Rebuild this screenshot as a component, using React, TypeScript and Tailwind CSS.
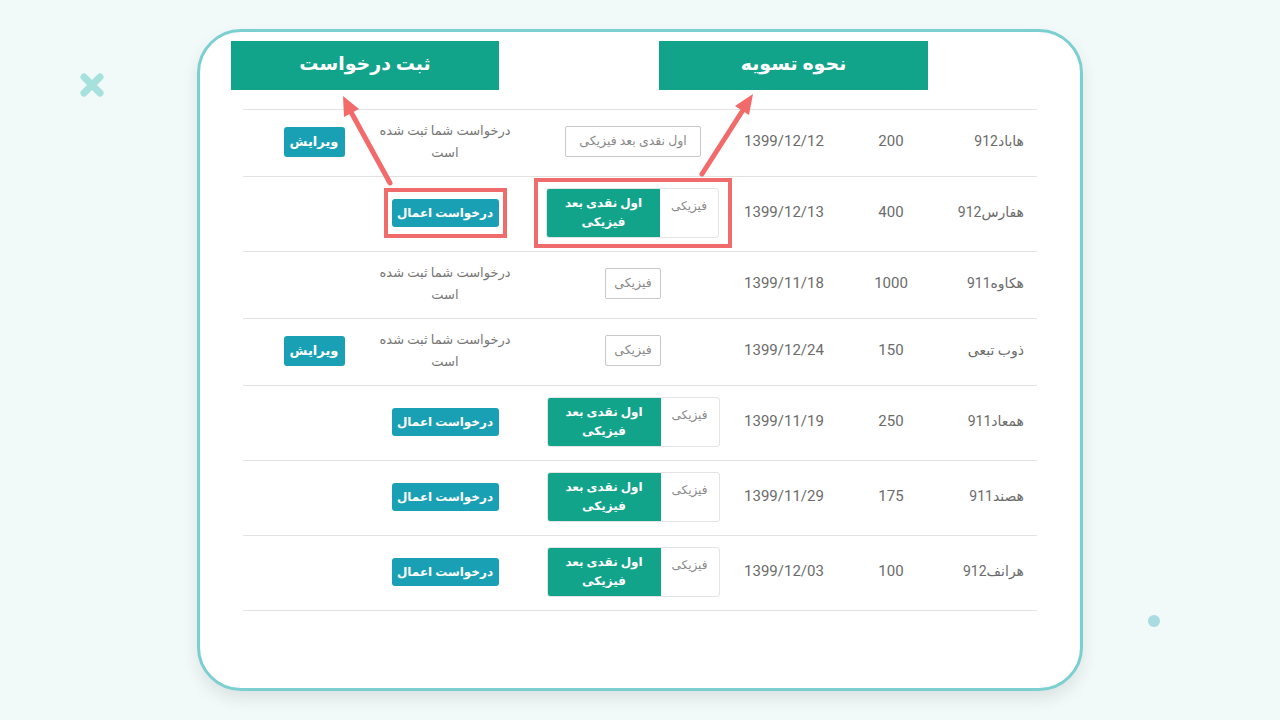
import React from "react";

type Row = {
  name: string;
  amount: string;
  date: string;
  settle: "box" | "fiz" | "toggle";
  done: boolean;
  edit: boolean;
  highlight?: boolean;
};

const rows: Row[] = [
  { name: "هاباد912", amount: "200", date: "1399/12/12", settle: "box", done: true, edit: true },
  { name: "هفارس912", amount: "400", date: "1399/12/13", settle: "toggle", done: false, edit: false, highlight: true },
  { name: "هکاوه911", amount: "1000", date: "1399/11/18", settle: "fiz", done: true, edit: false },
  { name: "ذوب تبعی", amount: "150", date: "1399/12/24", settle: "fiz", done: true, edit: true },
  { name: "همعاد911", amount: "250", date: "1399/11/19", settle: "toggle", done: false, edit: false },
  { name: "هصند911", amount: "175", date: "1399/11/29", settle: "toggle", done: false, edit: false },
  { name: "هرانف912", amount: "100", date: "1399/12/03", settle: "toggle", done: false, edit: false },
];

function Toggle() {
  return (
    <div className="flex h-[50px] w-[173px] overflow-hidden rounded-[3px] border border-[#e4e4e4]">
      <div className="flex w-[58px] justify-center pt-[8px] text-[12px] text-[#8a8a8a]">فیزیکی</div>
      <div className="flex flex-1 items-center justify-center bg-[#12a38b] px-2 text-center text-[12px] font-bold leading-[19px] text-white">
        اول نقدی بعد
        <br />
        فیزیکی
      </div>
    </div>
  );
}

function Settlement({ kind, highlight }: { kind: Row["settle"]; highlight?: boolean }) {
  if (kind === "box")
    return (
      <div className="flex h-[31px] w-[136px] items-center justify-center rounded-[2px] border border-[#c8c8c8] text-[12.5px] text-[#8a8a8a]">
        اول نقدی بعد فیزیکی
      </div>
    );
  if (kind === "fiz")
    return (
      <div className="flex h-[31px] w-[56px] items-center justify-center rounded-[2px] border border-[#c8c8c8] text-[12.5px] text-[#8a8a8a]">
        فیزیکی
      </div>
    );
  if (highlight)
    return (
      <div className="border-[4px] border-[#f06b6b] py-[6px] pl-[8px] pr-[9px]">
        <Toggle />
      </div>
    );
  return <Toggle />;
}

function ApplyButton() {
  return (
    <button className="h-[28px] w-[107px] rounded-[3px] bg-[#1aa0b4] text-[12px] font-bold text-white">
      درخواست اعمال
    </button>
  );
}

export default function App() {
  return (
    <div className="relative h-[720px] w-[1280px] overflow-hidden bg-[#f1f9f9] pl-[197px] pt-[29px] font-[Roboto,'DejaVu_Sans',sans-serif]">
      <div className="h-[662px] w-[886px] rounded-[44px] border-[3px] border-[#7ccfd0] bg-white shadow-[0_8px_16px_rgba(0,0,0,0.09)]">
        <div className="mt-[9px] flex gap-[160px] pl-[31px]">
          <div className="flex h-[49px] w-[268px] items-center justify-center bg-[#12a38b] pb-[2px] text-[19px] font-bold text-white">
            ثبت درخواست
          </div>
          <div className="flex h-[49px] w-[269px] items-center justify-center bg-[#12a38b] pb-[2px] text-[19px] font-bold text-white">
            نحوه تسویه
          </div>
        </div>

        <div dir="rtl" className="ml-[43px] mt-[19px] w-[794px] border-b border-[#e2e2e2]">
          {rows.map((r, i) => (
            <div
              key={i}
              className={`grid grid-cols-[92px_108px_106px_196px_180px_82px_30px] items-center border-t border-[#e2e2e2] pb-[3px] text-[#6b6b6b] ${
                r.settle === "toggle" ? "h-[75px]" : "h-[67px]"
              }`}
            >
              <div className="pr-[13px] text-[14px]">
                <span dir="ltr">{r.name}</span>
              </div>
              <div className="text-center text-[15px]">{r.amount}</div>
              <div className="text-center text-[15px]">{r.date}</div>
              <div className="flex justify-center">
                <Settlement kind={r.settle} highlight={r.highlight} />
              </div>
              <div className="flex justify-center">
                {r.done ? (
                  <div className="text-center text-[13px] leading-[22px] text-[#777]">
                    درخواست شما ثبت شده
                    <br />
                    است
                  </div>
                ) : r.highlight ? (
                  <div className="border-[4px] border-[#f06b6b] px-[4px] py-[7px]">
                    <ApplyButton />
                  </div>
                ) : (
                  <ApplyButton />
                )}
              </div>
              <div className="flex justify-center">
                {r.edit && (
                  <button className="h-[30px] w-[61px] rounded-[3px] bg-[#1aa0b4] text-[13px] font-bold text-white">
                    ویرایش
                  </button>
                )}
              </div>
              <div />
            </div>
          ))}
        </div>
      </div>

      <svg className="pointer-events-none absolute inset-0" width="1280" height="720" viewBox="0 0 1280 720">
        <g stroke="#a6e1dd" strokeWidth="7" strokeLinecap="round">
          <line x1="84" y1="77" x2="100" y2="93" />
          <line x1="100" y1="77" x2="84" y2="93" />
        </g>
        <circle cx="1154" cy="621" r="6" fill="#a8dbe2" />
        <g stroke="#f26a6a" strokeWidth="5" strokeLinecap="round" fill="#f26a6a">
          <line x1="390" y1="183" x2="351" y2="112" />
          <line x1="702" y1="174" x2="743" y2="110" />
        </g>
        <polygon points="343,96 359,109 344,117" fill="#f26a6a" />
        <polygon points="753,94 749,115 735,106" fill="#f26a6a" />
      </svg>
    </div>
  );
}
